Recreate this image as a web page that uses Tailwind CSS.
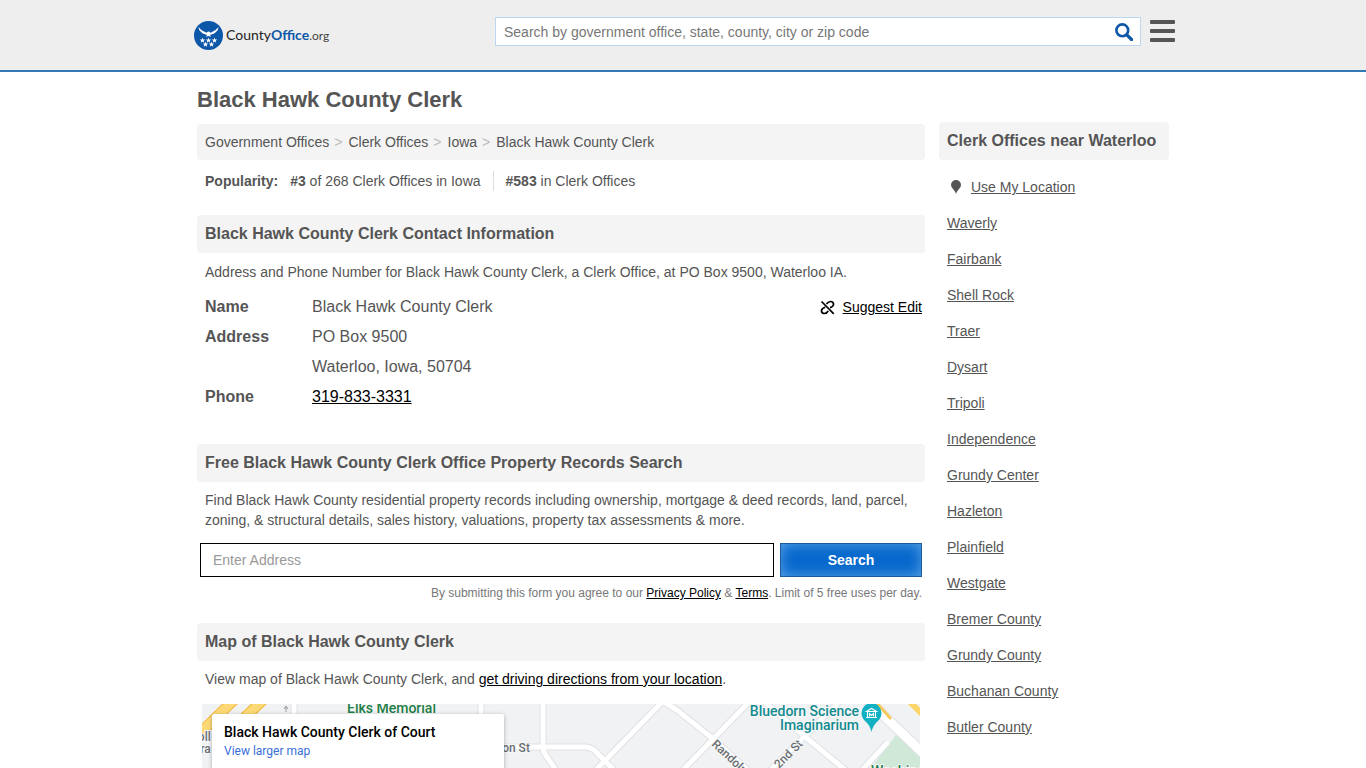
<!DOCTYPE html>
<html lang="en">
<head>
    <meta charset="UTF-8">
    <meta name="viewport" content="width=device-width, initial-scale=1.0">
    <title>Black Hawk County Clerk - CountyOffice.org</title>
    <script src="https://cdn.jsdelivr.net/npm/@tailwindcss/browser@4"></script>
</head>
<body class="h-screen overflow-hidden bg-white font-['Liberation_Sans',Arial,sans-serif] text-sm text-[#555]">
    <!-- Header -->
    <header class="bg-[#eee] border-b-2 border-[#337ab7]">
        <div class="max-w-[980px] mx-auto h-[70px] flex justify-between pl-px">
            <a href="#" class="flex items-center gap-[3px] text-sm text-[#222] font-['Lato',sans-serif]" aria-label="CountyOffice.org">
                <svg class="w-[29px] h-[29px]" viewBox="0 0 29 29">
                    <circle cx="14.500" cy="14.500" r="14.500" fill="#0d57a8"/>
                    <g fill="#fff">
                        <path d="M4.500 6 Q7 9.500 11 11 Q12.500 11.800 13 11.500 Q13.500 10.500 14.500 10.500 L16 11 L15.800 11.800 Q17 11.500 18 11 Q22 9.500 24.500 6 Q24.500 9 22 11 Q20 13 17 13.600 L16 14.300 L17.500 15.800 L14.500 15 L11.500 15.800 L13 14.300 L12 13.600 Q9 13 7 11 Q4.500 9 4.500 6Z"/>
                        <path id="star" d="M8.500 16.600 L9.200 18.500 L11.300 18.500 L9.700 19.800 L10.200 21.700 L8.500 20.600 L6.800 21.700 L7.300 19.800 L5.700 18.500 L7.800 18.500Z"/>
                        <use href="#star" x="6"/>
                        <use href="#star" x="12"/>
                        <use href="#star" x="3" y="4"/>
                        <use href="#star" x="9" y="4"/>
                    </g>
                </svg>
                <span>County<b class="text-[#0d57a8]">Office</b><span class="text-xs text-[#444]">.org</span></span>
            </a>
            <div class="flex pt-[17px] gap-[9px]">
                <form class="flex w-[646px] h-[29px] bg-white border border-[#bcd7ee]" onsubmit="return false">
                    <input type="text" aria-label="Search" placeholder="Search by government office, state, county, city or zip code" class="flex-1 px-2 outline-none placeholder:text-[#777]">
                    <button type="submit" aria-label="Submit search" class="w-8 flex items-center justify-center">
                        <svg class="w-[18px] h-[18px]" viewBox="0 0 18 18" fill="none" stroke="#0d57a8">
                            <circle cx="7.300" cy="7.300" r="5.900" stroke-width="2.600"/>
                            <path d="M11.800 11.800 L16.500 16.500" stroke-width="3.200" stroke-linecap="round"/>
                        </svg>
                    </button>
                </form>
                <button type="button" aria-label="Menu" class="flex flex-col gap-[5px] pt-[3px] w-[25px] -mr-[2px]">
                    <span class="w-full h-1 bg-[#555] rounded-[1px]"></span>
                    <span class="w-full h-1 bg-[#555] rounded-[1px]"></span>
                    <span class="w-full h-1 bg-[#555] rounded-[1px]"></span>
                </button>
            </div>
        </div>
    </header>

    <div class="max-w-[972px] mx-auto flex gap-[14px]">
        <!-- Main column -->
        <main class="flex-1 min-w-0">
            <h1 class="text-[22px] leading-7 font-bold pt-[14px] mb-[10px]">Black Hawk County Clerk</h1>
            <nav class="flex gap-[5px] bg-[#f4f4f4] rounded px-2 h-9 items-center" aria-label="Breadcrumb">
                <a href="#">Government Offices</a><span class="pr-px text-[#bbb]">&gt;</span>
                <a href="#">Clerk Offices</a><span class="pr-px text-[#bbb]">&gt;</span>
                <a href="#">Iowa</a><span class="pr-px text-[#bbb]">&gt;</span>
                <span>Black Hawk County Clerk</span>
            </nav>
            <div class="flex px-2 mt-[11px] leading-5 mb-6">
                <b class="mr-3">Popularity:</b>
                <span class="pr-3 border-r border-[#ddd]"><b>#3</b> of 268 Clerk Offices in Iowa</span>
                <span class="pl-3"><b>#583</b> in Clerk Offices</span>
            </div>

            <!-- Contact information -->
            <h2 class="bg-[#f4f4f4] rounded px-2 h-[38px] flex items-center text-base font-bold">Black Hawk County Clerk Contact Information</h2>
            <p class="px-2 mt-[9px] leading-5 mb-[10px]">Address and Phone Number for Black Hawk County Clerk, a Clerk Office, at PO Box 9500, Waterloo IA.</p>
            <div class="flex justify-between items-start pl-2 pr-[3px] mb-8">
                <dl class="grid grid-cols-[107px_auto] text-base leading-[30px]">
                    <dt class="font-bold">Name</dt>
                    <dd>Black Hawk County Clerk</dd>
                    <dt class="font-bold">Address</dt>
                    <dd>PO Box 9500<br>Waterloo, Iowa, 50704</dd>
                    <dt class="font-bold">Phone</dt>
                    <dd><a href="#" class="text-black underline">319-833-3331</a></dd>
                </dl>
                <a href="#" class="flex items-center gap-2 leading-[30px] text-black">
                    <svg class="w-[15px] h-[15px]" viewBox="0 0 15 15" fill="none" stroke="#000" stroke-width="1.700">
                        <path d="M1.500 1.500 L13.800 13.800"/>
                        <path d="M6.500 4 Q8.500 1.300 11 1.500 Q13.700 2 13.500 4.500 Q13.300 6.700 10 7.600"/>
                        <path d="M8.300 11 Q6.500 13.700 4 13.500 Q1.300 13 1.500 10.500 Q2 8.300 5.200 7.300"/>
                    </svg>
                    <span class="underline">Suggest Edit</span>
                </a>
            </div>

            <!-- Property records -->
            <h2 class="bg-[#f4f4f4] rounded px-2 h-[38px] flex items-center text-base font-bold">Free Black Hawk County Clerk Office Property Records Search</h2>
            <p class="px-2 mt-2 leading-5 mb-[13px]">Find Black Hawk County residential property records including ownership, mortgage &amp; deed records, land, parcel, zoning, &amp; structural details, sales history, valuations, property tax assessments &amp; more.</p>
            <form class="flex gap-[6px] px-[3px] h-[34px]" onsubmit="return false">
                <input type="text" aria-label="Address" placeholder="Enter Address" class="flex-1 border border-black px-3 outline-none placeholder:text-[#999]">
                <button type="submit" class="w-[142px] bg-[#0668cc] border border-[#1c5a9c] text-white font-bold shadow-[inset_0_0_14px_#5ba3e4]">Search</button>
            </form>
            <p class="text-right text-xs leading-4 text-[#777] mt-2 pr-[3px] mb-[22px]">By submitting this form you agree to our <a href="#" class="text-black underline">Privacy Policy</a> &amp; <a href="#" class="text-black underline">Terms</a>. Limit of 5 free uses per day.</p>

            <!-- Map -->
            <h2 class="bg-[#f4f4f4] rounded px-2 h-[38px] flex items-center text-base font-bold">Map of Black Hawk County Clerk</h2>
            <p class="px-2 mt-2 leading-5 mb-[15px]">View map of Black Hawk County Clerk, and <a href="#" class="text-black underline">get driving directions from your location</a>.</p>
            <div class="relative mx-[5px] h-[300px] bg-[#f1f2f4] overflow-hidden">
                <svg class="w-full h-full" viewBox="0 0 718 300" preserveAspectRatio="xMinYMin slice" font-family="Roboto, sans-serif" font-weight="500">
                    <defs>
                        <g id="roads" fill="none">
                            <path d="M279 -5 V80"/>
                            <path d="M341 -5 V43 Q341 48 345 53 L356 69"/>
                            <path d="M200 43 H383 Q391 43 397 51 L415 69"/>
                            <path d="M391 69 L463 -5"/>
                            <path d="M455 -6 L475 6 L510 34 L549 69"/>
                            <path d="M478 69 L550 -5"/>
                            <path d="M559 -5 L601 31 L647 69"/>
                            <path d="M566 69 L640 -5"/>
                            <path d="M686 38 L660 66"/>
                            <path d="M92 -5 V40"/>
                        </g>
                    </defs>
                    <path d="M665 69 L694 31 L722 54 V300 H665Z" fill="#cfe8d8"/>
                    <use href="#roads" stroke="#dfe1e5" stroke-width="7"/>
                    <path d="M663 -6 L722 50" stroke="#dfe1e5" stroke-width="11"/>
                    <use href="#roads" stroke="#fff" stroke-width="5"/>
                    <path d="M663 -6 L722 50" stroke="#fff" stroke-width="9"/>
                    <g fill="none">
                        <path d="M-4 31 L33 -5 M14 41 L62 -5" stroke="#f2b63c" stroke-width="11"/>
                        <path d="M-4 31 L33 -5 M14 41 L62 -5" stroke="#fdd976" stroke-width="9"/>
                        <path d="M674 -2 L689 15" stroke="#f6c95c" stroke-width="3"/>
                        <path d="M705 -5 L724 14" stroke="#fbd56c" stroke-width="6"/>
                    </g>
                    <path d="M84 8 V3 M82 5 L84 2 L86 5" stroke="#999" fill="none"/>
                    <g fill="#6b6f73" font-size="12" stroke="#f7f8f9" stroke-width="2" paint-order="stroke">
                        <text x="-12" y="37">Coll</text>
                        <text x="-10" y="49">Gra</text>
                        <text x="277" y="48">Mason St</text>
                        <text transform="translate(509 41) rotate(43)">Randolph St</text>
                        <text transform="translate(577 65) rotate(-45)">2nd St</text>
                    </g>
                    <g stroke="#f7f8f9" stroke-width="2" paint-order="stroke" font-size="14">
                        <text x="145" y="9" fill="#1e7e45">Elks Memorial</text>
                        <text x="657" y="12" text-anchor="end" fill="#128a8f">Bluedorn Science</text>
                        <text x="657" y="26" text-anchor="end" fill="#128a8f">Imaginarium</text>
                        <text x="669" y="72" fill="#1e7e45">Washington</text>
                    </g>
                    <path d="M669.500 28 Q668 21 663 17 Q659.500 13.500 659.500 9 A10 10 0 0 1 679.500 9 Q679.500 13.500 676 17 Q671 21 669.500 28Z" fill="#12b0c3"/>
                    <path d="M664.500 7.500 L669.500 4.500 L674.500 7.500Z M665.500 8 V13 M673.500 8 V13 M664 13.500 H675 M667.500 12.500 V9.500 L669.500 11.500 L671.500 9.500 V12.500" fill="none" stroke="#fff" stroke-width="1.100"/>
                </svg>
                <div class="absolute left-[10px] top-[10px] w-[292px] h-[90px] bg-white rounded-xs shadow-[0_1px_4px_rgba(0,0,0,0.3)] px-3 pt-2 font-['Roboto',sans-serif]">
                    <h3 class="text-sm leading-5 font-medium text-black">Black Hawk County Clerk of Court</h3>
                    <a href="#" class="block text-xs leading-[18px] text-[#3a6fd8]">View larger map</a>
                </div>
            </div>
        </main>

        <!-- Nearby offices -->
        <aside class="w-[230px] pt-[50px]">
            <h2 class="bg-[#f4f4f4] rounded px-2 h-[38px] flex items-center text-base font-bold whitespace-nowrap">Clerk Offices near Waterloo</h2>
            <ul class="px-2 pt-[9px] leading-9">
                <li class="flex items-center">
                    <svg class="w-[10px] h-[14px] ml-1 mr-[10px]" viewBox="0 0 10 14" fill="#555"><path d="M5 14 Q4.300 11.500 2 9 Q0 7 0 5 A5 5 0 0 1 10 5 Q10 7 8 9 Q5.700 11.500 5 14Z"/></svg>
                    <a href="#" class="underline">Use My Location</a>
                </li>
                <li><a href="#" class="underline">Waverly</a></li>
                <li><a href="#" class="underline">Fairbank</a></li>
                <li><a href="#" class="underline">Shell Rock</a></li>
                <li><a href="#" class="underline">Traer</a></li>
                <li><a href="#" class="underline">Dysart</a></li>
                <li><a href="#" class="underline">Tripoli</a></li>
                <li><a href="#" class="underline">Independence</a></li>
                <li><a href="#" class="underline">Grundy Center</a></li>
                <li><a href="#" class="underline">Hazleton</a></li>
                <li><a href="#" class="underline">Plainfield</a></li>
                <li><a href="#" class="underline">Westgate</a></li>
                <li><a href="#" class="underline">Bremer County</a></li>
                <li><a href="#" class="underline">Grundy County</a></li>
                <li><a href="#" class="underline">Buchanan County</a></li>
                <li><a href="#" class="underline">Butler County</a></li>
            </ul>
        </aside>
    </div>
</body>
</html>
